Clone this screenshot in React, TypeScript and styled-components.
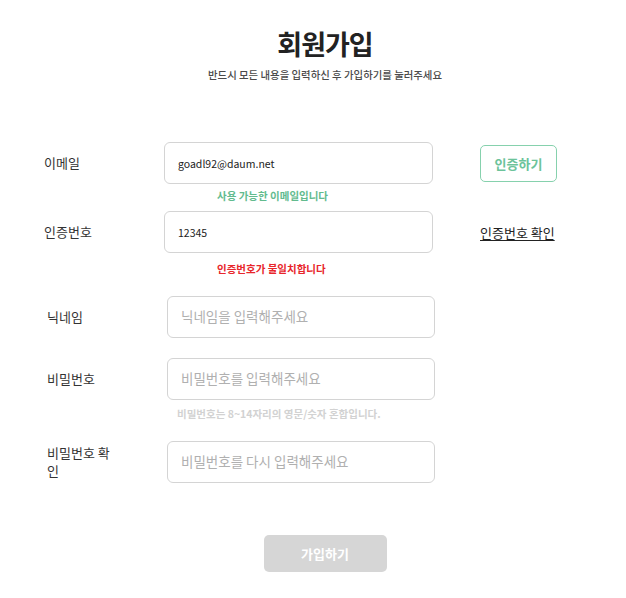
import React from "react";
import styled, { createGlobalStyle } from "styled-components";

const Global = createGlobalStyle`
  html, body { margin: 0; padding: 0; background: #fff; }
  body { font-family: "Noto Sans CJK KR", "Noto Sans", sans-serif; color: #222; }
  * { box-sizing: border-box; }
`;

const Page = styled.div`
  width: 626px;
  padding: 26px 0 0 24px;
`;

const Header = styled.header`
  text-align: center;
`;

const Title = styled.h1`
  margin: 0;
  font-size: 27px;
  line-height: 36px;
  font-weight: 700;
  letter-spacing: -1px;
  color: #222;
`;

const Subtitle = styled.p`
  margin: 6px 0 0;
  font-size: 10.4px;
  line-height: 14px;
  font-weight: 500;
  color: #4a4a4a;
`;

const Form = styled.form`
  margin: 60px 0 0 20px;
  display: flex;
  flex-direction: column;
`;

const Field = styled.div<{ $top: number; $shift?: number }>`
  margin-top: ${(p) => p.$top}px;
  padding-left: ${(p) => p.$shift ?? 0}px;
`;

const Row = styled.div`
  display: grid;
  grid-template-columns: 120px auto auto;
  justify-content: start;
  align-items: center;
`;

const Label = styled.label`
  width: 70px;
  font-size: 13px;
  line-height: 18px;
  color: #333;
`;

const Input = styled.input<{ $width?: number }>`
  width: ${(p) => p.$width ?? 269}px;
  height: 42px;
  border: 1px solid #d4d4d4;
  border-radius: 6px;
  padding: 0 13px;
  font-family: inherit;
  font-size: 10.5px;
  color: #222;
  outline: none;
  &::placeholder {
    color: #b0b0b0;
    font-size: 13.5px;
  }
`;

const Action = styled.div`
  padding-left: 47px;
  display: flex;
  align-items: center;
`;

const Message = styled.p<{ $tone: "ok" | "error" | "hint"; $indent: number }>`
  margin: ${(p) => (p.$tone === "hint" ? 7 : p.$tone === "ok" ? 5 : 9)}px 0 0;
  padding-left: ${(p) => 120 + p.$indent}px;
  font-size: 10.5px;
  line-height: 14px;
  font-weight: 700;
  color: ${(p) =>
    p.$tone === "ok" ? "#62bb8e" : p.$tone === "error" ? "#e8262b" : "#d2d2d2"};
`;

const OutlineButton = styled.button`
  width: 77px;
  height: 37px;
  border: 1px solid #86d1ad;
  border-radius: 5px;
  background: #fff;
  color: #6cc39a;
  font-family: inherit;
  font-size: 13px;
  font-weight: 700;
  padding: 0;
`;

const LinkButton = styled.a`
  font-size: 13px;
  color: #222;
  text-decoration: underline;
  text-underline-offset: 2px;
`;

const Footer = styled.div`
  margin-top: 52px;
  display: flex;
  justify-content: center;
`;

const SubmitButton = styled.button`
  width: 123px;
  height: 37px;
  border: none;
  border-radius: 5px;
  background: #d6d6d6;
  color: #fff;
  font-family: inherit;
  font-size: 13px;
  font-weight: 700;
`;

export default function App() {
  return (
    <Page>
      <Global />
      <Header>
        <Title>회원가입</Title>
        <Subtitle>반드시 모든 내용을 입력하신 후 가입하기를 눌러주세요</Subtitle>
      </Header>
      <Form onSubmit={(e) => e.preventDefault()}>
        <Field $top={0}>
          <Row>
            <Label>이메일</Label>
            <Input defaultValue="goadl92@daum.net" />
            <Action>
              <OutlineButton type="button">인증하기</OutlineButton>
            </Action>
          </Row>
          <Message $tone="ok" $indent={53}>사용 가능한 이메일입니다</Message>
        </Field>
        <Field $top={8}>
          <Row>
            <Label>인증번호</Label>
            <Input defaultValue="12345" />
            <Action>
              <LinkButton>인증번호 확인</LinkButton>
            </Action>
          </Row>
          <Message $tone="error" $indent={53}>인증번호가 불일치합니다</Message>
        </Field>
        <Field $top={20} $shift={3}>
          <Row>
            <Label>닉네임</Label>
            <Input $width={268} placeholder="닉네임을 입력해주세요" />
          </Row>
        </Field>
        <Field $top={20} $shift={3}>
          <Row>
            <Label>비밀번호</Label>
            <Input $width={268} type="password" placeholder="비밀번호를 입력해주세요" />
          </Row>
          <Message $tone="hint" $indent={10}>
            비밀번호는 8~14자리의 영문/숫자 혼합입니다.
          </Message>
        </Field>
        <Field $top={20} $shift={3}>
          <Row>
            <Label>비밀번호 확인</Label>
            <Input $width={268} type="password" placeholder="비밀번호를 다시 입력해주세요" />
          </Row>
        </Field>
      </Form>
      <Footer>
        <SubmitButton type="button">가입하기</SubmitButton>
      </Footer>
    </Page>
  );
}
